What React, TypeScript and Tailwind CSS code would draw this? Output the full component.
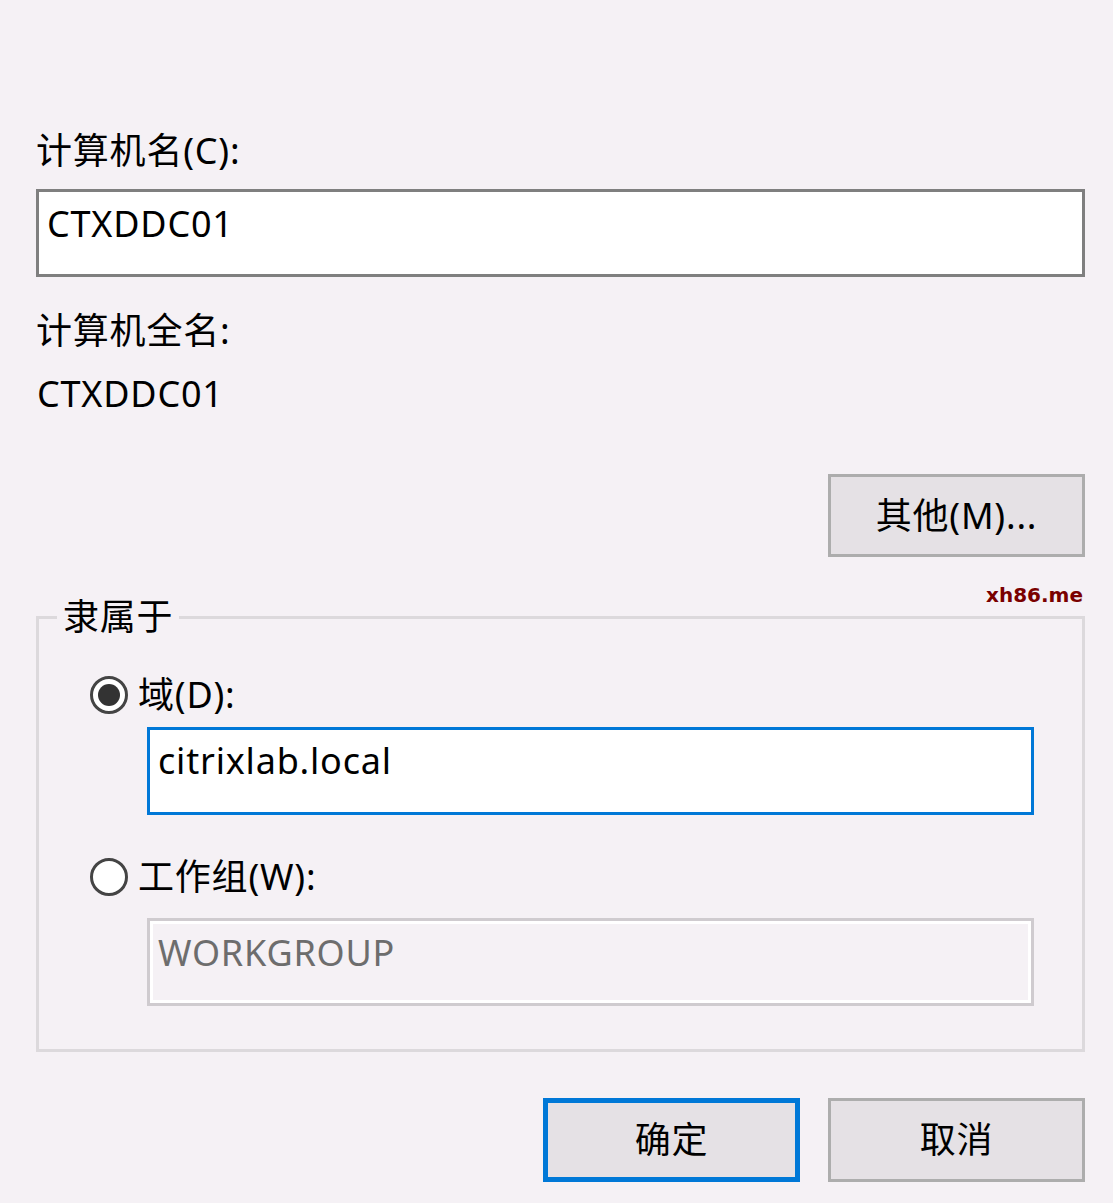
import React from "react";

function Radio({ checked }: { checked: boolean }) {
  return (
    <span className="flex items-center justify-center w-[38px] h-[38px] rounded-full border-[3px] border-[#444444] bg-white shrink-0">
      {checked && <span className="block w-[22px] h-[22px] rounded-full bg-[#333333]" />}
    </span>
  );
}

export default function App() {
  return (
    <div className="w-[1113px] h-[1203px] bg-[#f5f1f5] pl-[36px] pr-[28px] pt-[131px] text-[36px] leading-[40px] tracking-[0.8px] text-black font-['Noto_Sans','Noto_Sans_CJK_SC',sans-serif]">
      <div className="h-[40px]">计算机名(C):</div>
      <div className="mt-[18px] h-[88px] border-[3px] border-[#7f7f7f] bg-white pl-[8px] pt-[12px]">CTXDDC01</div>
      <div className="mt-[34px] h-[40px]">计算机全名:</div>
      <div className="mt-[23px] h-[40px] pl-[1px]">CTXDDC01</div>
      <div className="mt-[60px] flex justify-end">
        <button className="w-[257px] h-[83px] border-[3px] border-[#adadad] bg-[#e5e1e5] flex items-center justify-center">
          其他(M)...
        </button>
      </div>
      <div className="relative mt-[40px]">
        <div className="absolute right-[2px] top-[-12px] text-[20px] leading-[20px] tracking-normal font-bold text-[#7a0000] font-['DejaVu_Sans',sans-serif]">
          xh86.me
        </div>
        <fieldset className="border-[3px] border-[#dcd9dc] pl-[18px] pr-[48px] pb-[43px] pt-0 m-0 min-w-0">
          <legend className="px-[6px] leading-[40px]">隶属于</legend>
          <div className="mt-[38px] h-[40px] flex items-center gap-[10px] ml-[33px]">
            <Radio checked={true} />
            <span>域(D):</span>
          </div>
          <div className="mt-[12px] ml-[90px] h-[88px] border-[3px] border-[#0078d7] bg-white pl-[8px] pt-[11px]">
            citrixlab.local
          </div>
          <div className="mt-[42px] h-[40px] flex items-center gap-[10px] ml-[33px]">
            <Radio checked={false} />
            <span>工作组(W):</span>
          </div>
          <div className="mt-[21px] ml-[90px] h-[88px] border-[3px] border-[#cfcbcf] shadow-[inset_0_0_0_3px_#ffffff] bg-[#f5f1f5] pl-[8px] pt-[12px] text-[#6d6d6d]">
            WORKGROUP
          </div>
        </fieldset>
      </div>
      <div className="mt-[46px] flex justify-end gap-[28px]">
        <button className="w-[257px] h-[84px] border-[5px] border-[#0078d7] bg-[#e5e1e5] flex items-center justify-center">
          确定
        </button>
        <button className="w-[257px] h-[84px] border-[3px] border-[#adadad] bg-[#e5e1e5] flex items-center justify-center">
          取消
        </button>
      </div>
    </div>
  );
}
